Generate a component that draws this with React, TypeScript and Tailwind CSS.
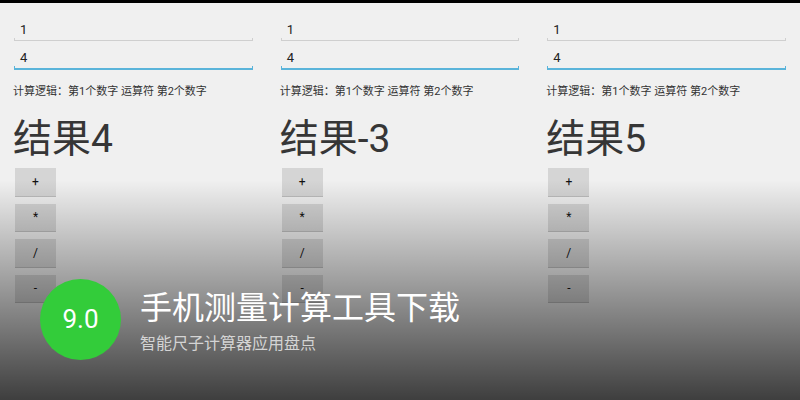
import React from "react";

const font = { fontFamily: 'Roboto, "Noto Sans CJK SC", sans-serif' };

function Panel({ a, b, result }: { a: string; b: string; result: string }) {
  return (
    <div className="flex flex-col px-[14px] pt-[19px] text-[#333]">
      <div className="h-[16px] px-[6px] text-[13px] leading-[16px] text-[#222]">{a}</div>
      <div className="h-[3px] border-x border-b border-[#cfcfcf]" />
      <div className="mt-[9px] h-[16px] px-[6px] text-[13px] leading-[16px] text-[#222]">{b}</div>
      <div className="h-[4px] border-x border-b-2 border-[#5ab4da]" />
      <div className="-ml-[1px] mt-[15px] whitespace-nowrap text-[11px] leading-[14px] text-[#333]">
        计算逻辑：第1个数字 运算符 第2个数字
      </div>
      <div className="-ml-[1px] mt-[18px] text-[39px] leading-[44px] text-[#363636]">{result}</div>
      <div className="mt-[7px] flex flex-col gap-[7px]">
        {["+", "*", "/", "-"].map((op) => (
          <div
            key={op}
            className="ml-[1px] flex h-[28.5px] w-[41px] items-center justify-center border-b border-[#bdbdbd] bg-[#d5d5d5] text-[12px] text-[#111]"
          >
            {op}
          </div>
        ))}
      </div>
    </div>
  );
}

export default function App() {
  return (
    <div className="relative h-[400px] w-[800px] overflow-hidden bg-[#f0f0f0]" style={font}>
      <div className="h-[3px] bg-black" />
      <div className="grid grid-cols-3">
        <Panel a="1" b="4" result="结果4" />
        <Panel a="1" b="4" result="结果-3" />
        <Panel a="1" b="4" result="结果5" />
      </div>
      <div className="pointer-events-none absolute left-0 right-0 top-[180px] h-[220px] bg-gradient-to-b from-[rgba(0,0,0,0)] to-[rgba(0,0,0,0.74)]" />
      <div className="absolute left-[40px] top-[279px] flex h-[81px] w-[81px] items-center justify-center rounded-full bg-[#33cc3a] text-[26px] text-white">
        9.0
      </div>
      <div className="absolute left-[140px] top-[286px] whitespace-nowrap text-[32px] leading-[44px] text-white">
        手机测量计算工具下载
      </div>
      <div className="absolute left-[140px] top-[334px] whitespace-nowrap text-[16px] leading-[20px] text-[#d4d4d4]">
        智能尺子计算器应用盘点
      </div>
    </div>
  );
}
